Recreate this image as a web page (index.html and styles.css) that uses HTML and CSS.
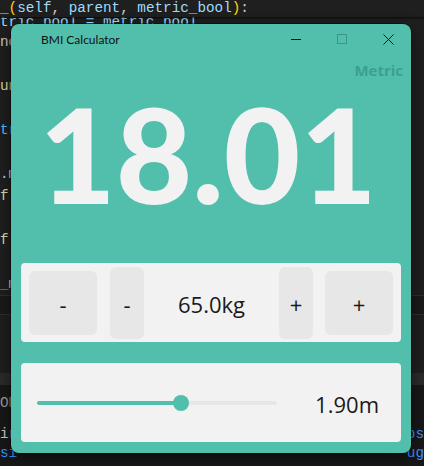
FILE: index.html
```html
<!DOCTYPE html>
<html>
<head>
<meta charset="utf-8">
<link rel="stylesheet" href="styles.css">
</head>
<body>
<div class="desktop">
  <div class="editor">
    <div class="code">
      <div class="ln first"><span class="v">tric_pool = metric_pool</span></div>
      <div class="ln"><span class="w">nc</span></div>
      <div class="ln"></div>
      <div class="ln"><span class="f">un</span></div>
      <div class="ln"></div>
      <div class="ln"><span class="k">tr</span></div>
      <div class="ln"></div>
      <div class="ln"><span class="v">.m</span></div>
      <div class="ln"><span class="f">f.</span></div>
      <div class="ln"></div>
      <div class="ln"><span class="f">f.</span></div>
      <div class="ln"></div>
      <div class="ln"><span class="o">_</span><span class="v">m</span></div>
    </div>
    <div class="sticky"><span class="w">_</span><span class="y">(</span><span class="v">self</span><span class="w">, </span><span class="v">parent</span><span class="w">, </span><span class="v">metric_bool</span><span class="y">)</span><span class="w">:</span></div>
    <div class="tabs"></div>
    <div class="panelarea"></div>
    <div class="band"></div>
    <div class="terminal">
      <div class="tl"><span class="g">ON</span></div>
      <div class="tl gap"><span class="w">ir</span><span class="bl">ps</span></div>
      <div class="tl"><span class="bl">si</span><span class="bl">ug</span></div>
    </div>
  </div>

  <div class="window">
    <div class="titlebar">
      <div class="title">BMI Calculator</div>
      <div class="ctrl">
        <svg width="10" height="10" viewBox="0 0 10 10"><path d="M0 5.5H10" stroke="#111" stroke-width="1"/></svg>
      </div>
      <div class="ctrl">
        <svg width="10" height="10" viewBox="0 0 10 10"><rect x="0.5" y="0.5" width="9" height="9" fill="none" stroke="#3e9585" stroke-width="1"/></svg>
      </div>
      <div class="ctrl">
        <svg width="11" height="11" viewBox="0 0 11 11"><path d="M0.5 0.5L10.5 10.5M10.5 0.5L0.5 10.5" stroke="#111" stroke-width="1"/></svg>
      </div>
    </div>
    <div class="content">
      <div class="mode">Metric</div>
      <div class="bmi">18.01</div>
      <div class="panel weight">
        <div class="btn big">-</div>
        <div class="btn small">-</div>
        <div class="value">65.0kg</div>
        <div class="btn small">+</div>
        <div class="btn big">+</div>
      </div>
      <div class="panel height">
        <div class="slider">
          <div class="fill" style="width:144px"></div>
          <div class="thumb"></div>
        </div>
        <div class="hval">1.90m</div>
      </div>
    </div>
  </div>
</div>
</body>
</html>
```

FILE: styles.css
```css
* { box-sizing: border-box; }
html, body { margin: 0; padding: 0; background: #1f1f1f; }
.desktop {
  position: relative;
  width: 424px;
  height: 466px;
  overflow: hidden;
  background: #1f1f1f;
}
.editor {
  display: flex;
  flex-direction: column;
  height: 466px;
  font-family: "Liberation Mono", "DejaVu Sans Mono", monospace;
  font-size: 14.3px;
}
.code {
  padding-top: 17px;
  height: 295px;
  background: #1f1f1f;
  overflow: hidden;
}
.ln {
  height: 22px;
  line-height: 22px;
  white-space: pre;
}
.ln.first {
  height: 14px;
  line-height: 11px;
  overflow: hidden;
}
.sticky {
  position: absolute;
  left: 0;
  top: 0;
  width: 430px;
  height: 17px;
  line-height: 17px;
  white-space: pre;
  overflow: hidden;
  background: #1f1f1f;
  box-shadow: 0 1px 2px rgba(0,0,0,0.7);
}
.v { color: #9cdcfe; }
.w { color: #cccccc; }
.f { color: #dcdcaa; }
.k { color: #4fc1ff; }
.o { color: #ce9178; }
.y { color: #ffd700; }
.g { color: #9d9d9d; }
.bl { color: #3794ff; }
.tabs {
  height: 20px;
  border-top: 1px solid #2f2f2f;
  border-bottom: 1px solid #2f2f2f;
  background: #1a1a1a;
}
.panelarea { height: 58px; background: #1f1f1f; }
.band { height: 12px; background: #2b2b2b; }
.terminal {
  flex: 1;
  background: #181818;
  padding-top: 9px;
}
.tl {
  height: 19px;
  line-height: 19px;
  display: flex;
  justify-content: space-between;
}
.tl.gap { margin-top: 12px; }

.window {
  position: absolute;
  left: 11px;
  top: 24px;
  width: 400px;
  height: 429px;
  background: #51bfac;
  border-radius: 8px;
  box-shadow: 0 0 0 1px rgba(0,0,0,0.35), 0 6px 16px rgba(0,0,0,0.5);
  display: flex;
  flex-direction: column;
  overflow: hidden;
}
.titlebar {
  height: 30px;
  display: flex;
  align-items: center;
}
.title {
  flex: 1;
  padding-left: 30px;
  font-family: "Lato", "Noto Sans", sans-serif;
  font-size: 12px;
  color: #111;
}
.ctrl {
  width: 46px;
  height: 30px;
  display: flex;
  align-items: center;
  justify-content: center;
}
.ctrl svg { display: block; }
.content {
  flex: 1;
  display: flex;
  flex-direction: column;
  padding: 0 10px 10px;
}
.mode {
  align-self: flex-end;
  margin-right: -2px;
  margin-top: 9px;
  font-family: "Open Sans", sans-serif;
  font-weight: 700;
  font-size: 15px;
  line-height: 15px;
  color: #3d9f8d;
}
.bmi {
  margin-top: 9px;
  font-family: "Lato", sans-serif;
  font-weight: 900;
  font-size: 132px;
  line-height: 132px;
  color: #f2f2f2;
  text-align: center;
  margin-left: -6px;
}
.panel {
  background: #f2f2f2;
  border-radius: 4px;
  height: 79px;
  display: flex;
  align-items: center;
  font-family: "Open Sans", sans-serif;
  font-size: 22px;
  color: #1a1a1a;
}
.weight {
  margin-top: 44px;
  padding: 0 8px;
}
.btn {
  background: #e7e7e7;
  border-radius: 6px;
  display: flex;
  align-items: center;
  justify-content: center;
  padding-top: 2px;
}
.btn.big { width: 68px; height: 64px; }
.btn.small { width: 34px; height: 72px; }
.btn.big:first-child { margin-right: 13px; }
.btn.big:last-child { margin-left: 12px; }
.value {
  flex: 1;
  text-align: center;
  padding-top: 2px;
}
.height {
  margin-top: 21px;
  padding: 0 22px 0 16px;
}
.slider {
  position: relative;
  width: 240px;
  height: 4px;
  border-radius: 2px;
  background: #e6e6e6;
}
.fill {
  height: 4px;
  border-radius: 2px;
  background: #51bfac;
}
.thumb {
  position: absolute;
  left: 136px;
  top: -6px;
  width: 16px;
  height: 16px;
  border-radius: 50%;
  background: #51bfac;
}
.hval {
  margin-left: auto;
  padding-top: 2px;
}
```
